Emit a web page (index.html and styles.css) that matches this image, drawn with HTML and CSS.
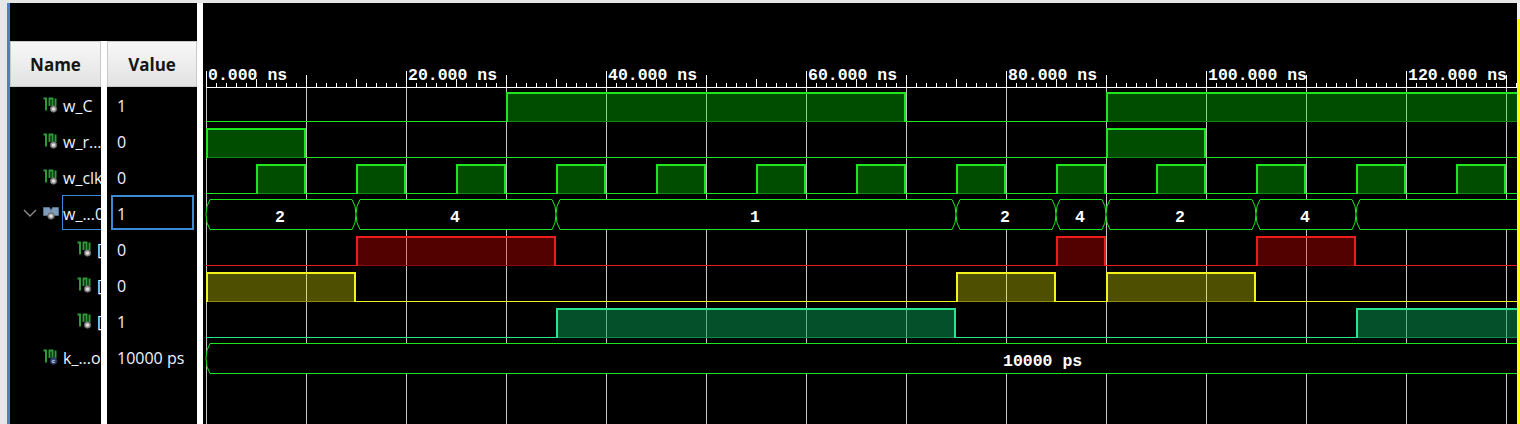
FILE: index.html
```html
<!DOCTYPE html>
<html>
<head>
<meta charset="utf-8">
<title>Waveform</title>
<link rel="stylesheet" href="styles.css">
</head>
<body>
<svg class="defs" width="0" height="0" aria-hidden="true">
  <defs>
    <symbol id="ic-sig" viewBox="0 0 16 16">
      <path class="ic-green" d="M0.5 1.5H3V13.5M6.5 9V1.5H9.5V9M12.5 9V1.5"/>
      <circle cx="10.5" cy="12" r="3.3" fill="#9a9a9a" stroke="#5a5a5a" stroke-width="0.8"/>
      <circle cx="10.5" cy="12" r="1.6" fill="#e4e4e4"/>
    </symbol>
    <symbol id="ic-const" viewBox="0 0 16 16">
      <path class="ic-green" d="M0.5 1.5H3V13.5M6.5 9V1.5H9.5V9M12.5 9V1.5"/>
      <circle cx="10.5" cy="12" r="3.4" fill="#34487a" stroke="#23304f" stroke-width="0.8"/>
      <text x="10.5" y="13.8" class="ic-c">c</text>
    </symbol>
    <symbol id="ic-bus" viewBox="0 0 16 16">
      <path d="M0.5 2.5H6.5L8 5.5L9.5 2.5H15.5V10.5H9.5L8 8L6.5 10.5H0.5Z" fill="#7f9cbb" stroke="#5d7894" stroke-width="0.8"/>
      <circle cx="8" cy="11" r="3.3" fill="#9a9a9a" stroke="#5a5a5a" stroke-width="0.8"/>
      <circle cx="8" cy="11" r="1.6" fill="#e4e4e4"/>
    </symbol>
  </defs>
</svg>

<div class="window">
  <div class="gutter"></div>
  <div class="accent"></div>

  <div class="signals">
    <div class="signals-top"></div>
    <div class="table">
      <div class="hdr">Name</div>
      <div class="hdr">Value</div>

      <div class="name"><span class="chev"></span><svg class="icon"><use href="#ic-sig"/></svg><span class="label">w_C</span></div>
      <div class="value"><span class="val">1</span></div>

      <div class="name"><span class="chev"></span><svg class="icon"><use href="#ic-sig"/></svg><span class="label">w_r...</span></div>
      <div class="value"><span class="val">0</span></div>

      <div class="name"><span class="chev"></span><svg class="icon"><use href="#ic-sig"/></svg><span class="label">w_clk</span></div>
      <div class="value"><span class="val">0</span></div>

      <div class="name"><span class="chev"><svg class="chev-svg" viewBox="0 0 14 9"><polyline points="1,1 7,7 13,1"/></svg></span><svg class="icon"><use href="#ic-bus"/></svg><span class="label sel">w_...0[2:0]</span></div>
      <div class="value"><span class="val sel">1</span></div>

      <div class="name child"><span class="chev"></span><svg class="icon"><use href="#ic-sig"/></svg><span class="label">[2]</span></div>
      <div class="value"><span class="val">0</span></div>

      <div class="name child"><span class="chev"></span><svg class="icon"><use href="#ic-sig"/></svg><span class="label">[1]</span></div>
      <div class="value"><span class="val">0</span></div>

      <div class="name child"><span class="chev"></span><svg class="icon"><use href="#ic-sig"/></svg><span class="label">[0]</span></div>
      <div class="value"><span class="val">1</span></div>

      <div class="name"><span class="chev"></span><svg class="icon"><use href="#ic-const"/></svg><span class="label">k_...od</span></div>
      <div class="value"><span class="val">10000 ps</span></div>

      <div class="name"></div>
      <div class="value"></div>
    </div>
  </div>

  <div class="split"></div>

  <div class="wave">
    <svg class="wave-svg" width="1314" height="421" viewBox="203 3 1314 421">
      <defs>
        <pattern id="tk1" x="206" y="0" width="10" height="10" patternUnits="userSpaceOnUse"><rect width="1" height="10" class="tick"/></pattern>
        <pattern id="tk5" x="206" y="0" width="50" height="10" patternUnits="userSpaceOnUse"><rect width="1" height="10" class="tick"/></pattern>
        <pattern id="tk10" x="206" y="0" width="100" height="10" patternUnits="userSpaceOnUse"><rect width="1" height="10" class="tick"/></pattern>
        <pattern id="tk20" x="206" y="0" width="200" height="10" patternUnits="userSpaceOnUse"><rect width="1" height="10" class="tick"/></pattern>
        <pattern id="grid" x="206" y="0" width="100" height="10" patternUnits="userSpaceOnUse"><rect width="1" height="10" class="gridline"/></pattern>
        <pattern id="clk" x="206" y="0" width="100" height="10" patternUnits="userSpaceOnUse"><rect x="50" width="50" height="10" class="f-g"/></pattern>
      </defs>

      <!-- ruler -->
      <rect x="206" y="83" width="1311" height="4" fill="url(#tk1)"/>
      <rect x="206" y="79" width="1311" height="4" fill="url(#tk5)"/>
      <rect x="206" y="75" width="1311" height="4" fill="url(#tk10)"/>
      <rect x="206" y="71" width="1311" height="4" fill="url(#tk20)"/>
      <rect x="206" y="87" width="1311" height="1" class="tick"/>
      <text class="rt" x="208" y="80">0.000 ns</text>
      <text class="rt" x="408" y="80">20.000 ns</text>
      <text class="rt" x="608" y="80">40.000 ns</text>
      <text class="rt" x="808" y="80">60.000 ns</text>
      <text class="rt" x="1008" y="80">80.000 ns</text>
      <text class="rt" x="1208" y="80">100.000 ns</text>
      <text class="rt" x="1408" y="80">120.000 ns</text>

      <!-- grid -->
      <rect x="206" y="88" width="1311" height="336" fill="url(#grid)"/>

      <!-- w_C -->
      <rect class="f-g" x="506" y="92" width="400" height="29"/>
      <rect class="f-g" x="1106" y="92" width="411" height="29"/>
      <path class="lo s-g" d="M206 121.5H507M905 121.5H1107"/>
      <path class="lo b-g" d="M508 121.5H904M1108 121.5H1517"/>
      <path class="hi s-g" d="M507 122V93H905V122M1107 122V93H1517"/>

      <!-- w_rst -->
      <rect class="f-g" x="206" y="128" width="100" height="29"/>
      <rect class="f-g" x="1106" y="128" width="100" height="29"/>
      <path class="lo s-g" d="M305 157.5H1107M1205 157.5H1517"/>
      <path class="lo b-g" d="M208 157.5H304M1108 157.5H1204"/>
      <path class="hi s-g" d="M207 158V129H305V158M1107 158V129H1205V158"/>

      <!-- w_clk -->
      <rect x="206" y="164" width="1300" height="29" fill="url(#clk)"/>
      <path class="lo s-g" d="M206 193.5H1517"/>
      <path class="lo b-g" d="M258 193.5H304M358 193.5H404M458 193.5H504M558 193.5H604M658 193.5H704M758 193.5H804M858 193.5H904M958 193.5H1004M1058 193.5H1104M1158 193.5H1204M1258 193.5H1304M1358 193.5H1404M1458 193.5H1504"/>
      <path class="hi s-g" d="M257 194V165H305V194M357 194V165H405V194M457 194V165H505V194M557 194V165H605V194M657 194V165H705V194M757 194V165H805V194M857 194V165H905V194M957 194V165H1005V194M1057 194V165H1105V194M1157 194V165H1205V194M1257 194V165H1305V194M1357 194V165H1405V194M1457 194V165H1505V194"/>

      <!-- bus -->
      <path class="bus" d="M206 214.5Q206 205.5 210 199.5H352Q356 205.5 356 214.5Q356 223.5 352 229.5H210Q206 223.5 206 214.5Z"/>
      <path class="bus" d="M356 214.5Q356 205.5 360 199.5H552Q556 205.5 556 214.5Q556 223.5 552 229.5H360Q356 223.5 356 214.5Z"/>
      <path class="bus" d="M556 214.5Q556 205.5 560 199.5H952Q956 205.5 956 214.5Q956 223.5 952 229.5H560Q556 223.5 556 214.5Z"/>
      <path class="bus" d="M956 214.5Q956 205.5 960 199.5H1052Q1056 205.5 1056 214.5Q1056 223.5 1052 229.5H960Q956 223.5 956 214.5Z"/>
      <path class="bus" d="M1056 214.5Q1056 205.5 1060 199.5H1102Q1106 205.5 1106 214.5Q1106 223.5 1102 229.5H1060Q1056 223.5 1056 214.5Z"/>
      <path class="bus" d="M1106 214.5Q1106 205.5 1110 199.5H1252Q1256 205.5 1256 214.5Q1256 223.5 1252 229.5H1110Q1106 223.5 1106 214.5Z"/>
      <path class="bus" d="M1256 214.5Q1256 205.5 1260 199.5H1352Q1356 205.5 1356 214.5Q1356 223.5 1352 229.5H1260Q1256 223.5 1256 214.5Z"/>
      <path class="bus" d="M1518 199.5H1360Q1356 205.5 1356 214.5Q1356 223.5 1360 229.5H1518"/>
      <text class="bt" x="280" y="222">2</text>
      <text class="bt" x="455" y="222">4</text>
      <text class="bt" x="755" y="222">1</text>
      <text class="bt" x="1005" y="222">2</text>
      <text class="bt" x="1080" y="222">4</text>
      <text class="bt" x="1180" y="222">2</text>
      <text class="bt" x="1305" y="222">4</text>

      <!-- [2] red -->
      <rect class="f-r" x="356" y="236" width="200" height="29"/>
      <rect class="f-r" x="1056" y="236" width="50" height="29"/>
      <rect class="f-r" x="1256" y="236" width="100" height="29"/>
      <path class="lo s-r" d="M206 265.5H1517"/>
      <path class="lo b-r" d="M358 265.5H554M1058 265.5H1104M1258 265.5H1354"/>
      <path class="hi s-r" d="M357 266V237H555V266M1057 266V237H1105V266M1257 266V237H1355V266"/>

      <!-- [1] yellow -->
      <rect class="f-y" x="206" y="272" width="150" height="29"/>
      <rect class="f-y" x="956" y="272" width="100" height="29"/>
      <rect class="f-y" x="1106" y="272" width="150" height="29"/>
      <path class="lo s-y" d="M206 301.5H1517"/>
      <path class="lo b-y" d="M208 301.5H354M958 301.5H1054M1108 301.5H1254"/>
      <path class="hi s-y" d="M207 302V273H355V302M957 302V273H1055V302M1107 302V273H1255V302"/>

      <!-- [0] teal -->
      <rect class="f-t" x="556" y="308" width="400" height="29"/>
      <rect class="f-t" x="1356" y="308" width="161" height="29"/>
      <path class="lo s-t" d="M206 337.5H1517"/>
      <path class="lo b-t" d="M558 337.5H954M1358 337.5H1517"/>
      <path class="hi s-t" d="M557 338V309H955V338M1357 338V309H1517"/>

      <!-- constant -->
      <path class="bus" d="M1518 343.5H210Q206 349.5 206 358.5Q206 367.5 210 373.5H1518"/>
      <text class="rt" x="1003" y="366">10000 ps</text>
    </svg>
  </div>

  <div class="edge">
    <div class="edge-top"></div>
    <div class="edge-cursor"></div>
  </div>
</div>
</body>
</html>
```

FILE: styles.css
```css
* { box-sizing: border-box; }
html, body { margin: 0; padding: 0; }
body {
  width: 1520px;
  height: 424px;
  overflow: hidden;
  background: #e6e6e6;
  font-family: "Open Sans", "Noto Sans", sans-serif;
}
.defs { position: absolute; width: 0; height: 0; overflow: hidden; }

.window {
  display: flex;
  height: 424px;
  padding-top: 3px;
}
.gutter { width: 7px; flex: none; }
.accent { width: 3px; flex: none; background: #4e7fc6; }

.signals {
  width: 187px;
  flex: none;
  display: flex;
  flex-direction: column;
  background: #000;
}
.signals-top { height: 38px; flex: none; }
.table {
  flex: 1;
  display: grid;
  grid-template-columns: 91px 90px;
  grid-template-rows: 46px repeat(8, 36px) 1fr;
  column-gap: 6px;
  background: #fff;
}
.hdr {
  background: linear-gradient(#f8f8f8, #e2e2e2);
  border: 1px solid #c9c9c9;
  display: flex;
  align-items: center;
  justify-content: center;
  font-weight: 700;
  font-size: 17px;
  color: #151515;
}
.name, .value {
  background: #000;
  color: #eef3ff;
  font-size: 16px;
  display: flex;
  align-items: center;
  overflow: hidden;
  white-space: nowrap;
}
.name { padding-left: 13px; }
.name.child { padding-left: 47px; }
.chev { width: 20px; flex: none; display: flex; align-items: center; }
.chev-svg { width: 14px; height: 9px; }
.chev-svg polyline { fill: none; stroke: #8c8c8c; stroke-width: 1.4; }
.icon { width: 16px; height: 16px; flex: none; }
.ic-green { fill: none; stroke: #2f9a3a; stroke-width: 2; }
.ic-c { font: bold 5.5px "DejaVu Sans", sans-serif; fill: #cfd8f0; text-anchor: middle; }
.label {
  margin-left: 3px;
  align-self: stretch;
  margin-bottom: 1px;
  border: 1px solid transparent;
  display: flex;
  align-items: center;
  padding-top: 3px;
}
.label.sel { border-color: #3a8ad6; }
.value { padding-left: 4px; align-items: flex-start; }
.val {
  width: 83px;
  height: 35px;
  border: 2px solid transparent;
  padding: 3px 0 0 4px;
  display: flex;
  align-items: center;
}
.val.sel { border-color: #3a8ad6; }

.split { width: 6px; flex: none; background: #fff; }
.wave { width: 1314px; flex: none; background: #000; }
.wave-svg { display: block; }

.edge { width: 3px; flex: none; display: flex; flex-direction: column; }
.edge-top { height: 16px; background: #f0f0f0; }
.edge-cursor { flex: 1; background: #ffff00; }

/* waveform drawing */
.tick { fill: #ffffff; }
.gridline { fill: #c4c4c4; }
.rt, .bt {
  font-family: "Liberation Mono", "Courier New", monospace;
  font-weight: 700;
  font-size: 16.5px;
  fill: #ffffff;
}
.bt { text-anchor: middle; }
.lo { stroke-width: 1; fill: none; }
.hi { stroke-width: 2; fill: none; }
.bus { fill: #000; stroke: #1ee61e; stroke-width: 1; }

.f-g { fill: rgba(0, 255, 0, 0.3); }
.s-g { stroke: #1ee61e; }
.b-g { stroke: #0f8c0f; }

.f-r { fill: rgba(255, 0, 0, 0.32); }
.s-r { stroke: #ec1c1c; }
.b-r { stroke: #8c0c0c; }

.f-y { fill: rgba(255, 255, 0, 0.31); }
.s-y { stroke: #f2f21e; }
.b-y { stroke: #8c8c10; }

.f-t { fill: rgba(6, 160, 84, 0.5); }
.s-t { stroke: #28e68c; }
.b-t { stroke: #108c50; }
```
